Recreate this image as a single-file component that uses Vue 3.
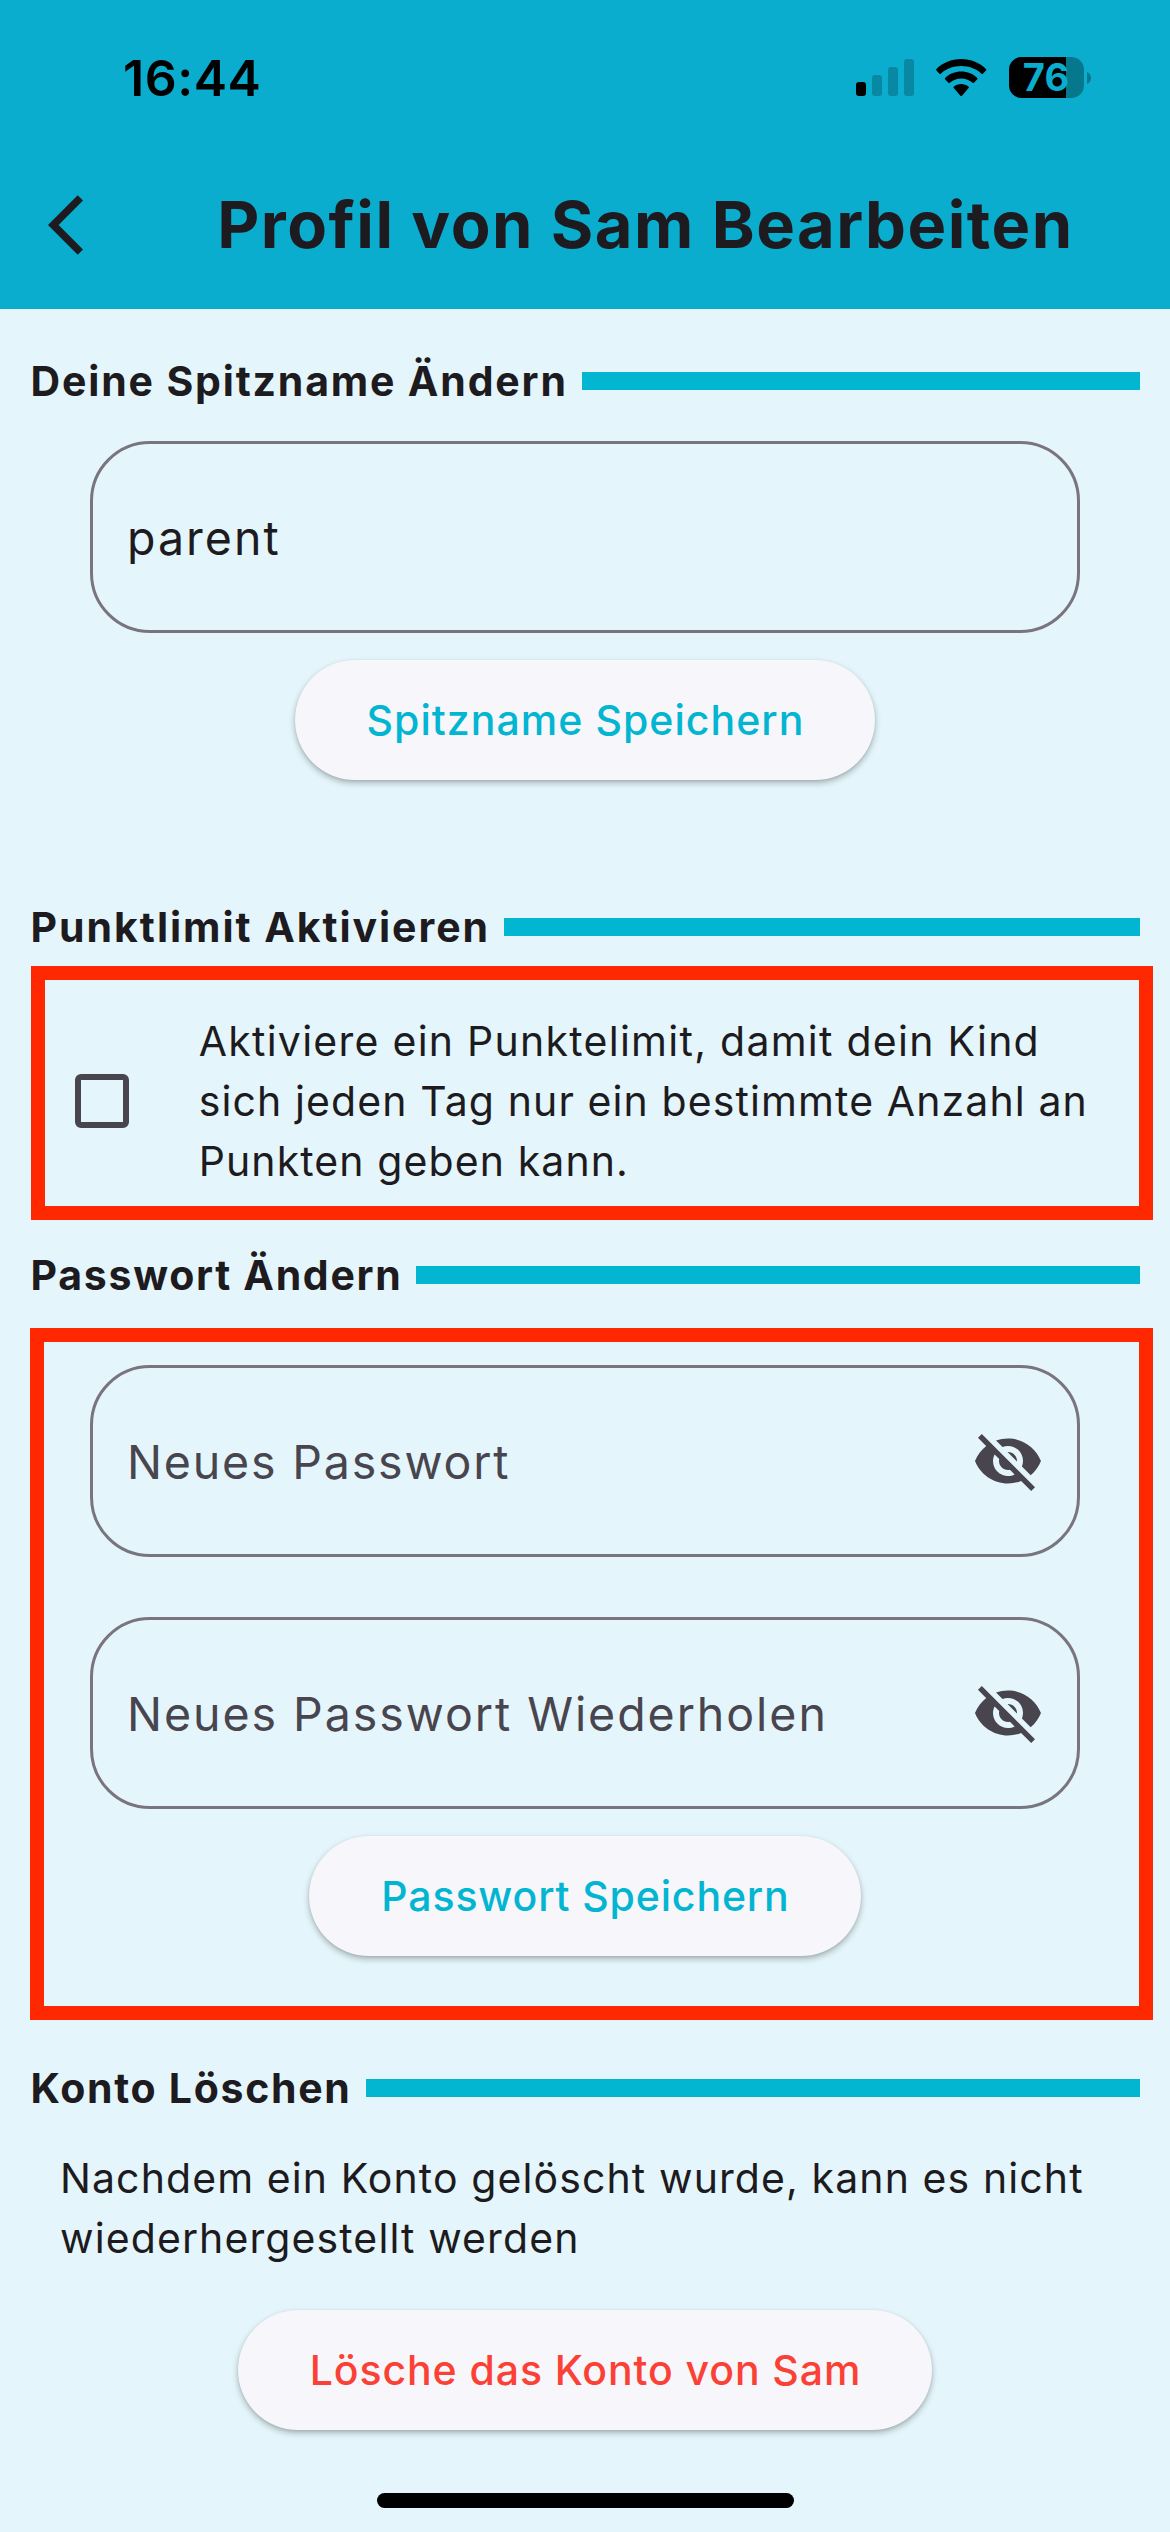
<script setup>
import { ref } from 'vue'

const title = 'Profil von Sam Bearbeiten'
const nickname = 'parent'
const limitEnabled = ref(false)

const passwordFields = [
  { label: 'Neues Passwort', cls: 'first' },
  { label: 'Neues Passwort Wiederholen', cls: 'repeat' },
]
</script>

<template>
  <div class="screen">
    <header class="top">
      <div class="status">
        <span class="time">16:44</span>
        <div class="indicators">
          <svg class="signal" viewBox="0 0 58 37">
            <rect x="0" y="23" width="10" height="14" rx="3" fill="#000" />
            <rect x="16" y="16" width="10" height="21" rx="3" fill="#0888a2" />
            <rect x="32" y="8" width="10" height="29" rx="3" fill="#0888a2" />
            <rect x="48" y="0" width="10" height="37" rx="3" fill="#0888a2" />
          </svg>
          <svg class="wifi" viewBox="0 0 50.4 37.4">
            <path d="M25.2 0C35 0 44 3.8 50 10.1Q50.6 10.8 50 11.5L46.9 14.7Q46.2 15.3 45.5 14.7C40 9.8 33 7.1 25.2 7.1S10.4 9.8 4.9 14.7Q4.2 15.3 3.5 14.7L.4 11.5Q-.2 10.8 .4 10.1C6.4 3.8 15.4 0 25.2 0z" />
            <path d="M25.2 12.6c6.3 0 12 2.4 16.1 6.3q.6.7 0 1.4l-3.3 3.4q-.7.6-1.4 0c-3-2.6-7-4.2-11.4-4.2s-8.4 1.6-11.4 4.2q-.7.6-1.4 0l-3.3-3.4q-.6-.7 0-1.4c4.1-3.9 9.8-6.3 16.1-6.3z" />
            <path d="M25.2 25c2.9 0 5.5 1 7.4 2.7q.7.7 0 1.4l-6.6 7.7q-.8.8-1.6 0l-6.6-7.7q-.7-.7 0-1.4c1.9-1.7 4.5-2.7 7.4-2.7z" />
          </svg>
          <div class="battery">
            <div class="cell"><span class="level">76</span></div>
            <svg class="cap" viewBox="0 0 4 12"><path d="M0 0C2.5 1 4 3.3 4 6S2.5 11 0 12z" fill="#06788e" /></svg>
          </div>
        </div>
      </div>
      <div class="appbar">
        <svg class="back" viewBox="0 0 24 24">
          <path d="M11.67 3.87L9.9 2.1 0 12l9.9 9.9 1.77-1.77L3.54 12z" />
        </svg>
        <h1>{{ title }}</h1>
      </div>
    </header>

    <main>
      <div class="heading h-nick"><h2>Deine Spitzname Ändern</h2><i class="bar"></i></div>
      <div class="field nick"><span class="value">{{ nickname }}</span></div>
      <button class="btn save-nick">Spitzname Speichern</button>

      <div class="heading h-limit"><h2>Punktlimit Aktivieren</h2><i class="bar"></i></div>
      <section class="frame limit">
        <span class="checkbox" role="checkbox" :aria-checked="limitEnabled"></span>
        <p class="copy">
          <span class="line wide">Aktiviere ein Punktelimit, damit dein Kind</span>
          <span class="line">sich jeden Tag nur ein bestimmte Anzahl an</span>
          <span class="line">Punkten geben kann.</span>
        </p>
      </section>

      <div class="heading h-pass"><h2>Passwort Ändern</h2><i class="bar"></i></div>
      <section class="frame pass">
        <div v-for="f in passwordFields" :key="f.label" class="field" :class="f.cls">
          <span class="label">{{ f.label }}</span>
          <svg class="eye" viewBox="0 0 24 24">
            <path d="M12 7c2.76 0 5 2.24 5 5 0 .65-.13 1.26-.36 1.83l2.92 2.92c1.51-1.26 2.7-2.89 3.43-4.75-1.73-4.39-6-7.5-11-7.5-1.4 0-2.74.25-3.98.7l2.16 2.16C10.74 7.13 11.35 7 12 7zM2 4.27l2.28 2.28.46.46C3.08 8.3 1.78 10.02 1 12c1.73 4.39 6 7.5 11 7.5 1.55 0 3.03-.3 4.38-.84l.42.42L19.73 22 21 20.73 3.27 3 2 4.27zM7.53 9.8l1.55 1.55c-.05.21-.08.43-.08.65 0 1.66 1.34 3 3 3 .22 0 .44-.03.65-.08l1.55 1.55c-.67.33-1.41.53-2.2.53-2.76 0-5-2.24-5-5 0-.79.2-1.53.53-2.2zm4.31-.78l3.15 3.15.02-.16c0-1.66-1.34-3-3-3l-.17.01z" />
          </svg>
        </div>
        <button class="btn save-pass">Passwort Speichern</button>
      </section>

      <div class="heading h-delete"><h2>Konto Löschen</h2><i class="bar"></i></div>
      <p class="copy warning">
        <span class="line">Nachdem ein Konto gelöscht wurde, kann es nicht</span>
        <span class="line">wiederhergestellt werden</span>
      </p>
      <button class="btn danger">Lösche das Konto von Sam</button>
    </main>

    <footer class="home"><i></i></footer>
  </div>
</template>

<style>
body {
  margin: 0;
  background: #e4f6fb;
}
</style>

<style scoped>
.screen {
  width: 1170px;
  height: 2532px;
  display: flex;
  flex-direction: column;
  background: #e4f6fb;
  color: #1d1b20;
  font-family: Inter, "Liberation Sans", sans-serif;
  overflow: hidden;
}

h1,
h2,
p {
  margin: 0;
}

.top {
  height: 309px;
  background: #0aadce;
}

.status {
  height: 141px;
  display: flex;
  justify-content: space-between;
  padding: 0 79px 0 123px;
}

.time {
  margin-top: 48px;
  line-height: 60px;
  font-size: 50px;
  font-weight: 600;
  letter-spacing: 0.55px;
  color: #000;
}

.indicators {
  display: flex;
  height: 155px;
  align-items: center;
}

.signal {
  width: 58px;
  height: 37px;
}

.wifi {
  width: 50.4px;
  height: 37.4px;
  margin-left: 22.3px;
}

.battery {
  display: flex;
  align-items: center;
  margin-left: 22.3px;
}

.cell {
  width: 75px;
  height: 41px;
  border-radius: 12.5px;
  background: linear-gradient(to right, #000 57px, #06788e 57px);
}

.level {
  display: block;
  padding-left: 13.7px;
  line-height: 41px;
  font-size: 38px;
  font-weight: 700;
  letter-spacing: 0.3px;
  color: #0aadce;
}

.cap {
  width: 4px;
  height: 12px;
  margin-left: 3px;
}

.appbar {
  height: 168px;
  display: flex;
  align-items: center;
  padding-left: 48px;
}

.back {
  width: 72px;
  height: 72px;
  fill: #1d1b20;
}

h1 {
  margin-left: 97.2px;
  font-size: 65px;
  line-height: 80px;
  font-weight: 700;
  letter-spacing: 1.47px;
  white-space: nowrap;
}

main {
  display: flex;
  flex-direction: column;
  align-items: center;
}

.heading {
  align-self: stretch;
  display: flex;
  align-items: center;
  gap: 14px;
  height: 50px;
  padding: 0 30px 0 30.6px;
}

.h-nick { margin-top: 47px; }
.h-limit { margin-top: 122px; }
.h-pass { margin-top: 30px; }
.h-delete { margin-top: 43px; }

h2 {
  font-size: 41px;
  line-height: 50px;
  font-weight: 700;
  letter-spacing: 1.83px;
  white-space: nowrap;
}

.h-limit h2 { letter-spacing: 1.96px; }
.h-pass h2 { letter-spacing: 1.7px; }
.h-delete h2 { letter-spacing: 1.7px; }

.bar {
  flex: 1;
  height: 18px;
  background: #02b5d1;
}

.field {
  box-sizing: border-box;
  width: 990px;
  height: 192px;
  border: 3px solid #79747e;
  border-radius: 60px;
  display: flex;
  align-items: center;
  justify-content: space-between;
  padding: 0 33px 0 34px;
  font-size: 46.5px;
  line-height: 60px;
  white-space: nowrap;
}

.nick {
  margin-top: 35px;
}

.value {
  letter-spacing: 2.03px;
}

.label {
  color: #49454f;
}

.first .label { letter-spacing: 1.82px; }
.repeat .label { letter-spacing: 1.95px; }

.value,
.label {
  padding-top: 1px;
}

.repeat {
  margin-top: 60px;
}

.eye {
  width: 72px;
  height: 72px;
  fill: #49454f;
}

.btn {
  box-sizing: border-box;
  margin: 27px 0 0;
  padding: 0 0 0 1px;
  height: 120px;
  border: 0;
  border-radius: 60px;
  background: #f6f6fb;
  box-shadow: 0 3px 6px rgba(0, 0, 0, 0.27), 0 1px 3px rgba(0, 0, 0, 0.08);
  color: #02b5d1;
  font: 500 41px/120px Inter, "Liberation Sans", sans-serif;
  white-space: nowrap;
}

.save-nick { width: 580px; letter-spacing: 1.04px; }
.save-pass { width: 552px; letter-spacing: 0.86px; }
.danger { width: 694px; margin-top: 42px; letter-spacing: 0.92px; color: #fb4135; }

.frame {
  box-sizing: border-box;
  align-self: flex-start;
  display: flex;
  border: 14px solid #ff2800;
}

.limit {
  margin: 14px 0 0 31px;
  width: 1122px;
  height: 254px;
  align-items: center;
  padding: 31px 0 15px 30px;
}

.checkbox {
  box-sizing: border-box;
  width: 54px;
  height: 54px;
  border: 6px solid #49454f;
  border-radius: 6px;
}

.copy {
  font-size: 41px;
  line-height: 60px;
  letter-spacing: 1.1px;
  white-space: nowrap;
}

.limit .copy {
  margin-left: 69.7px;
}

.line {
  display: block;
}

.wide {
  letter-spacing: 1.26px;
}

.pass {
  margin: 28px 0 0 30px;
  width: 1123px;
  height: 692px;
  flex-direction: column;
  align-items: center;
  padding: 23px 59px 0 46px;
}

.warning {
  align-self: flex-start;
  margin: 35px 0 0 60px;
}

.home {
  display: flex;
  justify-content: center;
  margin-top: 63px;
}

.home i {
  width: 417px;
  height: 15px;
  border-radius: 7.5px;
  background: #000;
}
</style>
